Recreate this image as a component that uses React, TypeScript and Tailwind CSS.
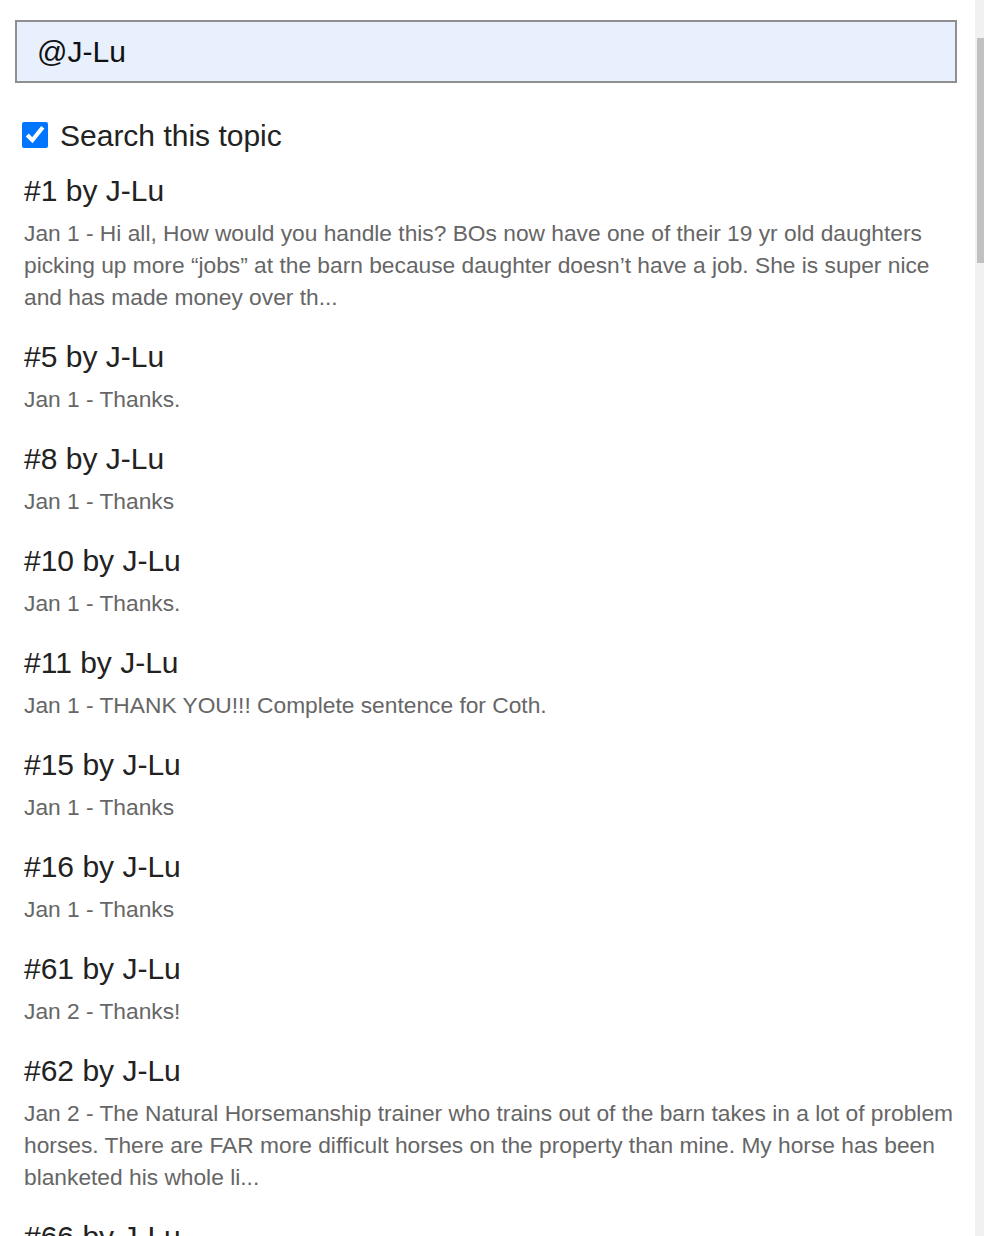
const posts = [
  {
    n: 1,
    text: "Jan 1 - Hi all, How would you handle this? BOs now have one of their 19 yr old daughters picking up more \u201cjobs\u201d at the barn because daughter doesn\u2019t have a job. She is super nice and has made money over th...",
  },
  { n: 5, text: "Jan 1 - Thanks." },
  { n: 8, text: "Jan 1 - Thanks" },
  { n: 10, text: "Jan 1 - Thanks." },
  { n: 11, text: "Jan 1 - THANK YOU!!! Complete sentence for Coth." },
  { n: 15, text: "Jan 1 - Thanks" },
  { n: 16, text: "Jan 1 - Thanks" },
  { n: 61, text: "Jan 2 - Thanks!" },
  {
    n: 62,
    text: "Jan 2 - The Natural Horsemanship trainer who trains out of the barn takes in a lot of problem horses. There are FAR more difficult horses on the property than mine. My horse has been blanketed his whole li...",
  },
  { n: 66, text: "Jan 2 - Thanks again." },
];

export default function App() {
  return (
    <div
      className="flex h-[1236px] w-[984px] overflow-hidden bg-white"
      style={{ fontFamily: '"Liberation Sans", Arial, sans-serif' }}
    >
      <div className="flex-1 overflow-hidden">
        <div className="ml-[15px] mt-[20px] flex h-[63px] w-[942px] items-center border-2 border-[#8f8f8f] bg-[#e8f0fe] px-[20px] text-[30px] text-[#111]">
          @J-Lu
        </div>

        <label className="ml-[18px] mt-[34px] flex h-[36px] items-center gap-[12px] text-[30px] text-[#222]">
          <input
            type="checkbox"
            defaultChecked
            className="ml-[4px] h-[26px] w-[26px] accent-[#0075ff]"
          />
          Search this topic
        </label>

        <div className="mt-[20px] pl-[24px] pr-[18px]">
          {posts.map((p) => (
            <div key={p.n} className="mb-[26px]">
              <div className="mb-[8px] text-[30px] leading-[36px] text-[#222]">
                #{p.n} by J-Lu
              </div>
              <div className="text-[22.75px] leading-[32px] text-[#666]">
                {p.text}
              </div>
            </div>
          ))}
        </div>
      </div>

      {/* scrollbar */}
      <div className="w-[9px] bg-[#f1f1f1] pl-[2px]">
        <div className="mt-[38px] h-[225px] w-[7px] bg-[#c1c1c1]" />
      </div>
    </div>
  );
}
